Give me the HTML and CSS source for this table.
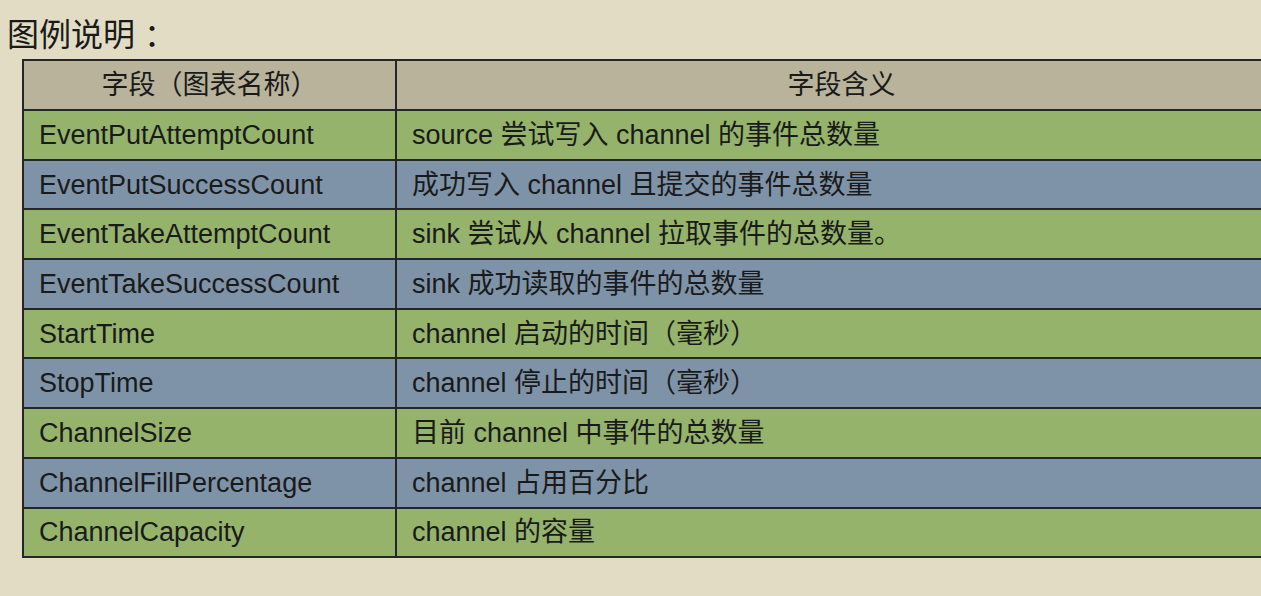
FILE: index.html
```html
<!DOCTYPE html>
<html lang="zh">
<head>
<meta charset="utf-8">
<link rel="stylesheet" href="styles.css">
</head>
<body>
<div class="page">
  <h1 class="title">图例说明<span class="colon">：</span></h1>
  <table class="legend">
    <thead>
      <tr class="head"><th class="c1">字段（图表名称）</th><th class="c2">字段含义</th></tr>
    </thead>
    <tbody>
      <tr class="g"><td>EventPutAttemptCount</td><td>source 尝试写入 channel 的事件总数量</td></tr>
      <tr class="b"><td>EventPutSuccessCount</td><td>成功写入 channel 且提交的事件总数量</td></tr>
      <tr class="g"><td>EventTakeAttemptCount</td><td>sink 尝试从 channel 拉取事件的总数量。</td></tr>
      <tr class="b"><td>EventTakeSuccessCount</td><td>sink 成功读取的事件的总数量</td></tr>
      <tr class="g"><td>StartTime</td><td>channel 启动的时间（毫秒）</td></tr>
      <tr class="b"><td>StopTime</td><td>channel 停止的时间（毫秒）</td></tr>
      <tr class="g"><td>ChannelSize</td><td>目前 channel 中事件的总数量</td></tr>
      <tr class="b"><td>ChannelFillPercentage</td><td>channel 占用百分比</td></tr>
      <tr class="g"><td>ChannelCapacity</td><td>channel 的容量</td></tr>
    </tbody>
  </table>
</div>
</body>
</html>
```
FILE: styles.css
```css
html, body {
  margin: 0;
  padding: 0;
  background: #e3dcc4;
  overflow: hidden;
}
.page {
  width: 1261px;
  height: 596px;
  overflow: hidden;
  font-family: "Liberation Sans", "Noto Sans CJK SC", sans-serif;
  color: #1a1a1a;
}
.title {
  margin: 0;
  padding: 16px 0 0 7px;
  height: 59px;
  box-sizing: border-box;
  font-family: "Noto Sans CJK SC", sans-serif;
  font-size: 32px;
  font-weight: normal;
  line-height: 32px;
  color: #1a1a1a;
  white-space: nowrap;
}
.colon {
  padding-left: 9px;
}
.legend {
  margin-left: 22px;
  border-collapse: collapse;
  width: 1266px;
  table-layout: fixed;
  font-size: 27px;
}
.legend th, .legend td {
  border: 2px solid #262626;
  height: 48px;
  padding: 0 0 0 15px;
  font-weight: normal;
  text-align: left;
  white-space: nowrap;
  line-height: 30px;
}
.legend td {
  height: 47.7px;
}
.legend th {
  text-align: center;
  padding: 0;
  background: #b9b39c;
}
.c1 { width: 371px; }
.g td { background: #95b36a; }
.b td { background: #7f93a8; }
```
